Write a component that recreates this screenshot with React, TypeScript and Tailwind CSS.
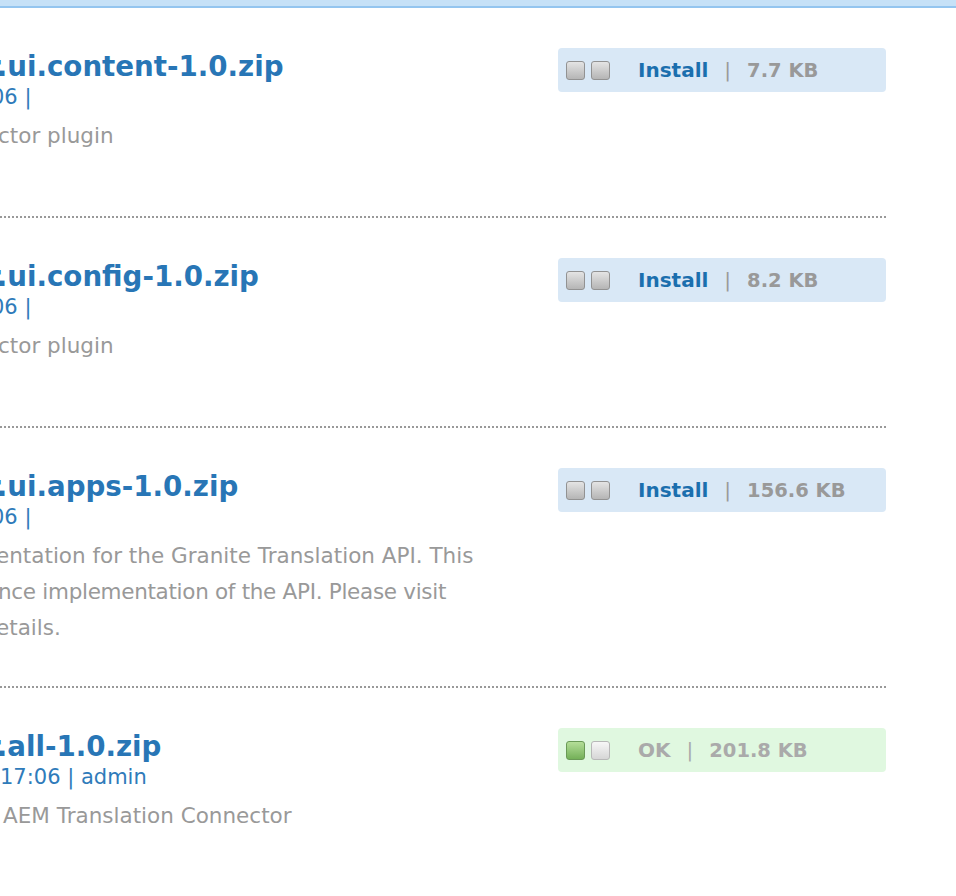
import React from 'react';

type Line = { text: string; shift: string; track?: string };

type Pkg = {
  title: string;
  meta: string;
  metaShift: string;
  desc: Line[];
  size: string;
  installed?: boolean;
};

const packages: Pkg[] = [
  {
    title: 'r.ui.content-1.0.zip',
    meta: '06 |',
    metaShift: '-ml-[9px]',
    desc: [{ text: 'ctor plugin', shift: '-ml-[2px]' }],
    size: '7.7 KB',
  },
  {
    title: 'r.ui.config-1.0.zip',
    meta: '06 |',
    metaShift: '-ml-[9px]',
    desc: [{ text: 'ctor plugin', shift: '-ml-[2px]' }],
    size: '8.2 KB',
  },
  {
    title: 'r.ui.apps-1.0.zip',
    meta: '06 |',
    metaShift: '-ml-[9px]',
    desc: [
      { text: 'entation for the Granite Translation API. This', shift: '-ml-[4px]' },
      { text: 'nce implementation of the API. Please visit', shift: '-ml-[2px]', track: 'tracking-[-0.3px]' },
      { text: 'etails.', shift: '-ml-[4px]' },
    ],
    size: '156.6 KB',
  },
  {
    title: 'r.all-1.0.zip',
    meta: '17:06 | admin',
    metaShift: 'ml-0',
    desc: [{ text: 'AEM Translation Connector', shift: 'ml-[3px]' }],
    size: '201.8 KB',
    installed: true,
  },
];

const Square: React.FC<{ tone: 'gray' | 'green' | 'light' }> = ({ tone }) => {
  const cls =
    tone === 'green'
      ? 'border-[#6a9a56] bg-gradient-to-b from-[#b4de98] to-[#74b058]'
      : tone === 'light'
        ? 'border-[#b8b8b8] bg-gradient-to-b from-[#f7f7f7] to-[#d6d6d6]'
        : 'border-[#929292] bg-gradient-to-b from-[#e4e4e4] to-[#b5b5b5]';
  return <div className={`w-[19px] h-[19px] rounded-[3px] border ${cls}`} />;
};

const StatusBox: React.FC<{ pkg: Pkg }> = ({ pkg }) => {
  const ok = pkg.installed;
  return (
    <div
      className={`w-[328px] h-[44px] shrink-0 rounded-[4px] flex items-center pl-[8px] ${
        ok ? 'bg-[#e0f8e0]' : 'bg-[#d9e8f6]'
      }`}
    >
      <div className="flex items-center gap-[6px]">
        <Square tone={ok ? 'green' : 'gray'} />
        <Square tone={ok ? 'light' : 'gray'} />
      </div>
      <div className="flex items-baseline ml-[28px] text-[20px] font-bold leading-none pt-[1px]">
        {ok ? (
          <span className="text-[#aaaaaa]">OK</span>
        ) : (
          <span className="text-[#1b6fae]">Install</span>
        )}
        <span className={`font-normal ml-[16px] mr-[16px] ${ok ? 'text-[#aaaaaa]' : 'text-[#9a9a9a]'}`}>|</span>
        <span className={`text-[19.5px] ${ok ? 'text-[#aaaaaa]' : 'text-[#999999]'}`}>{pkg.size}</span>
      </div>
    </div>
  );
};

const App: React.FC = () => {
  return (
    <div
      className="min-h-screen w-full bg-white overflow-hidden"
      style={{ fontFamily: '"DejaVu Sans", Verdana, sans-serif' }}
    >
      {/* top toolbar edge */}
      <div className="h-[8px] bg-[#c6e1f7] border-b-2 border-[#94c5ef]" />

      <div className="mr-[70px]">
        {packages.map((pkg, idx) => (
          <div
            key={idx}
            className={`flex pt-[40px] pb-[40px] ${
              idx < packages.length - 1 ? 'border-b-2 border-dotted border-[#999999]' : ''
            }`}
          >
            <div className="flex-1 min-w-0 min-h-[128px] whitespace-nowrap">
              <div className="-ml-[13px] pt-[1px] text-[27.7px] font-bold leading-[36px] text-[#2876b6]">
                {pkg.title}
              </div>
              <div className={`${pkg.metaShift} text-[21px] leading-[24px] text-[#2f7bba]`}>
                {pkg.meta}
              </div>
              <div className="mt-[9px]">
                {pkg.desc.map((line, i) => (
                  <div
                    key={i}
                    className={`${line.shift} ${line.track ?? ''} text-[21.5px] leading-[36px] text-[#999999]`}
                  >
                    {line.text}
                  </div>
                ))}
              </div>
            </div>
            <StatusBox pkg={pkg} />
          </div>
        ))}
      </div>
    </div>
  );
};

export default App;
